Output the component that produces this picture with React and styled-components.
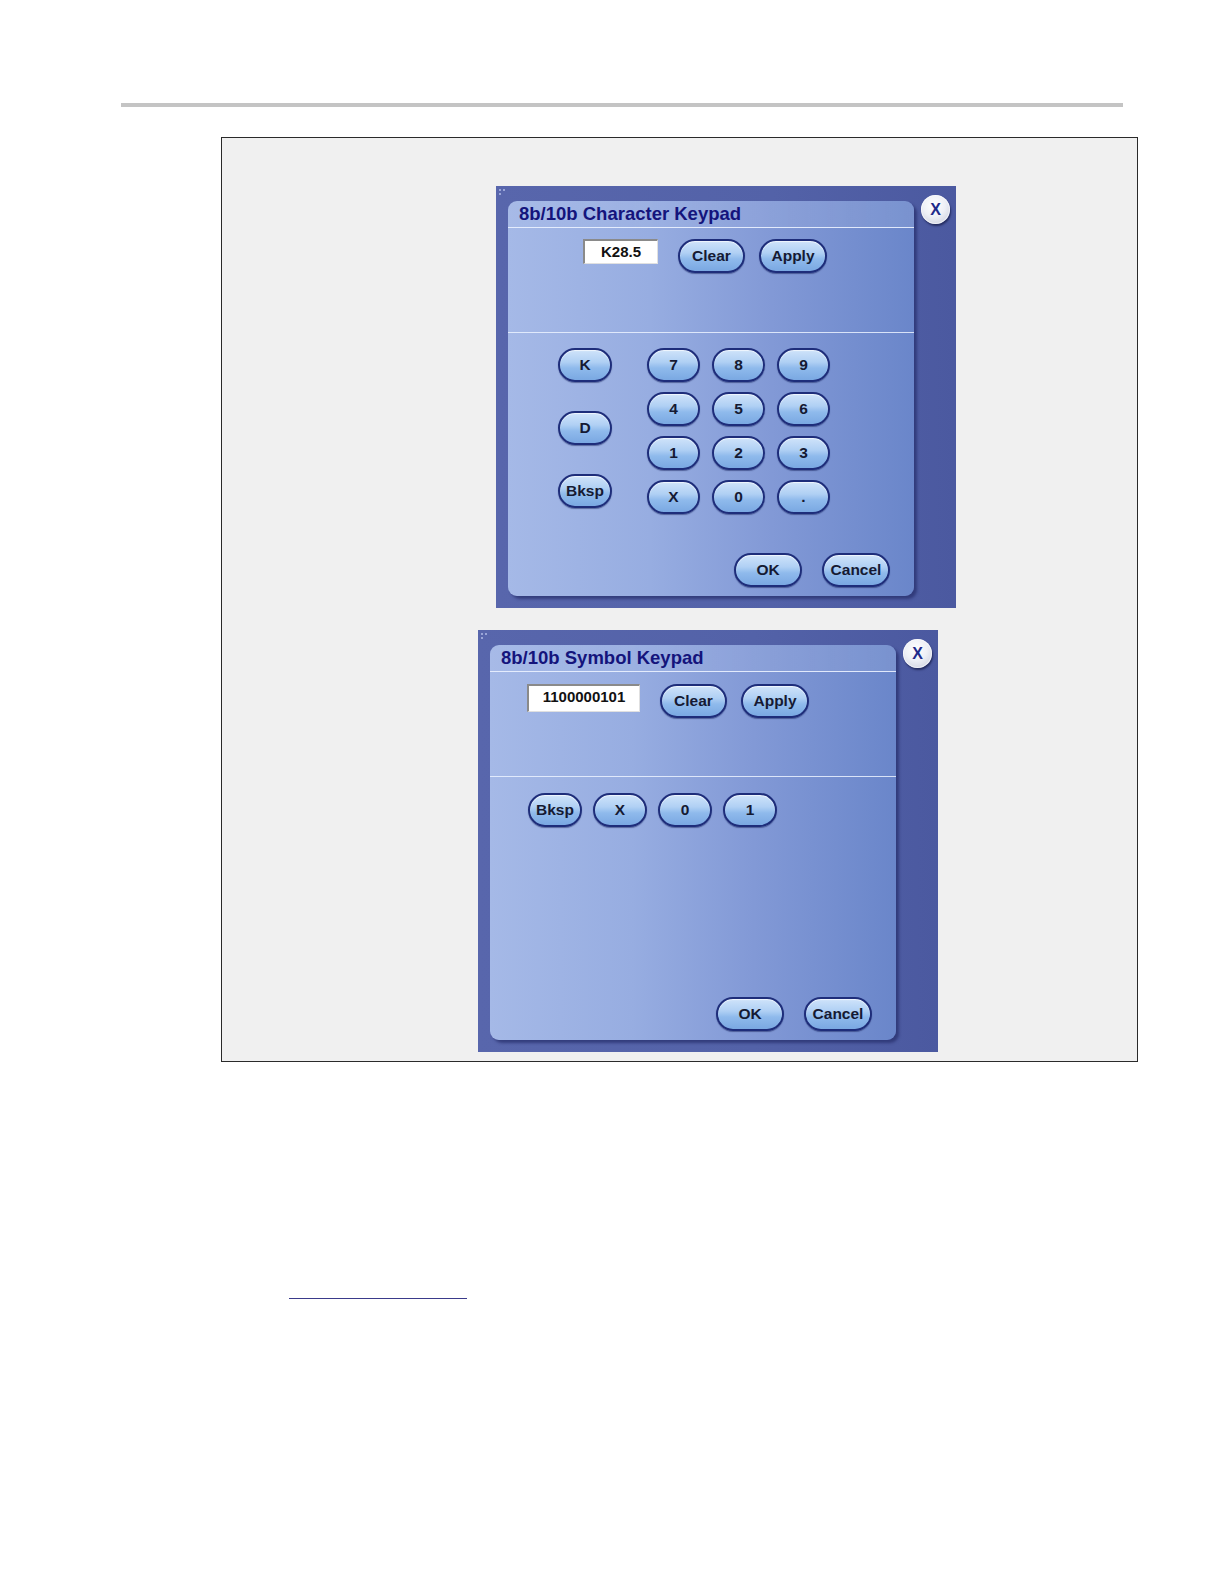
import React from "react";
import styled, { createGlobalStyle } from "styled-components";

const GlobalStyle = createGlobalStyle`
  html, body {
    margin: 0;
    padding: 0;
    background: #ffffff;
    overflow: hidden;
  }
  body {
    font-family: "Liberation Sans", Arial, sans-serif;
  }
`;

const Page = styled.div`
  width: 1224px;
  height: 1584px;
  overflow: hidden;
  padding-top: 103px;
  box-sizing: border-box;
  display: flex;
  flex-direction: column;
  align-items: flex-start;
`;

const TopRule = styled.div`
  margin-left: 121px;
  width: 1002px;
  height: 4px;
  background: #c4c4c4;
`;

const Figure = styled.div`
  margin-top: 30px;
  margin-left: 221px;
  width: 917px;
  height: 925px;
  box-sizing: border-box;
  border: 1px solid #2a2a2a;
  background: #f0f0f0;
  padding-top: 48px;
  display: flex;
  flex-direction: column;
  align-items: flex-start;
  gap: 22px;
`;

const Dialog = styled.div`
  position: relative;
  margin-left: ${(p) => p.$left}px;
  width: 460px;
  height: 422px;
  box-sizing: border-box;
  padding: 15px 42px 12px 12px;
  background: linear-gradient(to right, #5866ac 0%, #5362a8 60%, #4b59a0 100%);
  display: flex;
`;

const Grip = styled.svg`
  position: absolute;
  left: 3px;
  top: 3px;
`;

const CloseButton = styled.div`
  position: absolute;
  top: 9px;
  right: 6px;
  width: 29px;
  height: 29px;
  border-radius: 50%;
  background: radial-gradient(circle at 45% 35%, #ffffff 0%, #eef0f6 45%, #c4c8d8 100%);
  box-shadow: 1px 2px 2px rgba(20, 25, 70, 0.7), inset 0 0 0 1px rgba(255, 255, 255, 0.6);
  display: flex;
  align-items: center;
  justify-content: center;
  color: #1e2a8a;
  font-weight: bold;
  font-size: 16px;
`;

const Panel = styled.div`
  flex: 1;
  display: flex;
  flex-direction: column;
  border-radius: 9px;
  background: linear-gradient(to right, #a5b9e7 0%, #97ade1 35%, #8299d6 65%, #6a86ca 100%);
  box-shadow: 3px 3px 3px rgba(40, 48, 110, 0.75);
  overflow: hidden;
`;

const TitleBar = styled.div`
  height: 27px;
  box-sizing: border-box;
  padding-left: 11px;
  display: flex;
  align-items: center;
  border-bottom: 1px solid rgba(235, 242, 255, 0.9);
  background: linear-gradient(to right, rgba(255, 255, 255, 0.02), rgba(255, 255, 255, 0.1));
  color: #14147c;
  font-weight: bold;
  font-size: 18.5px;
`;

const EntrySection = styled.div`
  height: 105px;
  box-sizing: border-box;
  padding: ${(p) => p.$top}px 0 0 ${(p) => p.$indent}px;
  border-bottom: 1px solid rgba(235, 242, 255, 0.85);
  display: flex;
  align-items: flex-start;
  gap: 20px;
`;

const EntryBox = styled.div`
  width: ${(p) => p.$w}px;
  height: ${(p) => p.$h}px;
  box-sizing: border-box;
  background: #ffffff;
  border-top: 2px solid #8a8a8a;
  border-left: 2px solid #8a8a8a;
  border-right: 1px solid #e0e0e0;
  border-bottom: 1px solid #e0e0e0;
  display: flex;
  align-items: flex-start;
  justify-content: center;
  padding-top: 2px;
  font-weight: bold;
  font-size: 15px;
  color: #111111;
`;

const ButtonPair = styled.div`
  display: flex;
  gap: 14px;
`;

const PillButton = styled.div`
  width: ${(p) => p.$w || 53}px;
  height: 34px;
  box-sizing: border-box;
  border-radius: 17px;
  border: 2px solid #1e2d7a;
  background: linear-gradient(to bottom, #cfe3fa 0%, #b0d0f4 40%, #8fbaec 60%, #7aa8e2 100%);
  box-shadow: inset 0 1px 1px rgba(255, 255, 255, 0.7), 0 1px 1px rgba(20, 30, 90, 0.5);
  display: flex;
  align-items: center;
  justify-content: center;
  font-weight: bold;
  font-size: 15.5px;
  color: #151a33;
`;

const KeySection = styled.div`
  flex: 1;
  display: flex;
  flex-direction: column;
  padding: ${(p) => p.$top}px 24px 9px ${(p) => p.$indent}px;
`;

const KeyArea = styled.div`
  display: flex;
  gap: 35px;
`;

const SideColumn = styled.div`
  display: flex;
  flex-direction: column;
  gap: 29px;
`;

const NumberGrid = styled.div`
  display: grid;
  grid-template-columns: repeat(3, 53px);
  grid-auto-rows: 34px;
  column-gap: 12px;
  row-gap: 10px;
`;

const KeyRow = styled.div`
  display: flex;
  gap: 11px;
`;

const Footer = styled.div`
  margin-top: auto;
  display: flex;
  justify-content: flex-end;
  gap: 20px;
`;

const LinkRule = styled.div`
  margin-top: 236px;
  margin-left: 289px;
  width: 178px;
  height: 1px;
  background: #3a3a8a;
`;

const GripDots = () => (
  <Grip width="12" height="10" viewBox="0 0 12 10">
    <rect x="0" y="0" width="2" height="2" fill="#9aa6d8" />
    <rect x="4" y="0" width="2" height="2" fill="#9aa6d8" />
    <rect x="0" y="4" width="2" height="2" fill="#9aa6d8" />
  </Grip>
);

const numbers = ["7", "8", "9", "4", "5", "6", "1", "2", "3", "X", "0", "."];

const CharacterKeypad = () => (
  <Dialog $left={274}>
    <GripDots />
    <CloseButton>X</CloseButton>
    <Panel>
      <TitleBar>8b/10b Character Keypad</TitleBar>
      <EntrySection $top={11} $indent={75}>
        <EntryBox $w={75} $h={25}>K28.5</EntryBox>
        <ButtonPair>
          <PillButton $w={67}>Clear</PillButton>
          <PillButton $w={68}>Apply</PillButton>
        </ButtonPair>
      </EntrySection>
      <KeySection $top={15} $indent={50}>
        <KeyArea>
          <SideColumn>
            <PillButton $w={54}>K</PillButton>
            <PillButton $w={54}>D</PillButton>
            <PillButton $w={54}>Bksp</PillButton>
          </SideColumn>
          <NumberGrid>
            {numbers.map((n) => (
              <PillButton key={n}>{n}</PillButton>
            ))}
          </NumberGrid>
        </KeyArea>
        <Footer>
          <PillButton $w={68}>OK</PillButton>
          <PillButton $w={68}>Cancel</PillButton>
        </Footer>
      </KeySection>
    </Panel>
  </Dialog>
);

const SymbolKeypad = () => (
  <Dialog $left={256}>
    <GripDots />
    <CloseButton>X</CloseButton>
    <Panel>
      <TitleBar>8b/10b Symbol Keypad</TitleBar>
      <EntrySection $top={12} $indent={37}>
        <EntryBox $w={113} $h={28}>1100000101</EntryBox>
        <ButtonPair>
          <PillButton $w={67}>Clear</PillButton>
          <PillButton $w={68}>Apply</PillButton>
        </ButtonPair>
      </EntrySection>
      <KeySection $top={16} $indent={38}>
        <KeyRow>
          <PillButton $w={54}>Bksp</PillButton>
          <PillButton $w={54}>X</PillButton>
          <PillButton $w={54}>0</PillButton>
          <PillButton $w={54}>1</PillButton>
        </KeyRow>
        <Footer>
          <PillButton $w={68}>OK</PillButton>
          <PillButton $w={68}>Cancel</PillButton>
        </Footer>
      </KeySection>
    </Panel>
  </Dialog>
);

const App = () => (
  <>
    <GlobalStyle />
    <Page>
      <TopRule />
      <Figure>
        <CharacterKeypad />
        <SymbolKeypad />
      </Figure>
      <LinkRule />
    </Page>
  </>
);

export default App;
